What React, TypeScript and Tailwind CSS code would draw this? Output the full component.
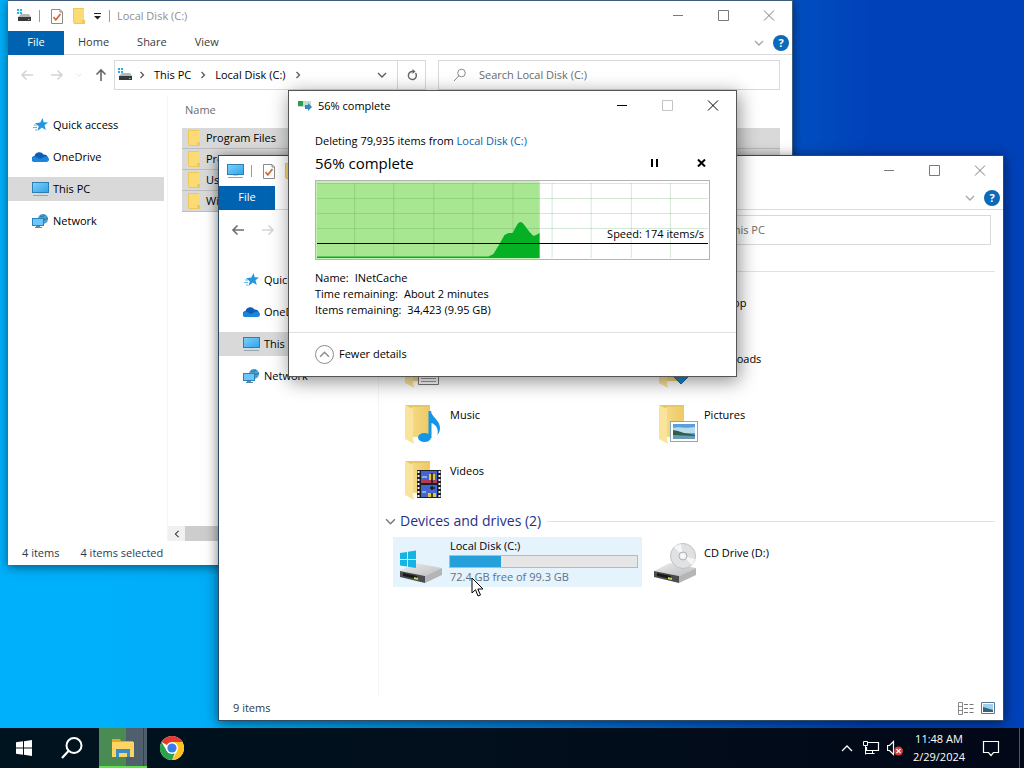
import type { ReactNode } from "react";

/* ---------- icons ---------- */

function DriveSmallIcon() {
  return (
    <svg width="16" height="16" viewBox="0 0 16 16" aria-hidden="true">
      <path d="M1 1h2v2H1zM4 1h2v2H4zM1 4h2v2H1zM4 4h2v2H4z" fill="#1fb6dc" />
      <path d="M2 9l3-3h8l2 3z" fill="#b4b7b9" />
      <path d="M2 9h13v4H2z" fill="#37393b" />
      <path d="M12 11h1.500v1H12z" fill="#5fe07a" />
    </svg>
  );
}

function PropertiesIcon() {
  return (
    <svg width="14" height="17" viewBox="0 0 14 17" aria-hidden="true">
      <path d="M1.500 1.500h8.500l2.500 2.500v11.500h-11z" fill="#fff" stroke="#8c8c8c" />
      <path d="M10 1.500v2.500h2.500" fill="none" stroke="#8c8c8c" />
      <path d="M3.500 9l2.300 2.800L10.500 6" fill="none" stroke="#cf6a35" strokeWidth="1.700" />
    </svg>
  );
}

function FolderSmallIcon() {
  return (
    <svg width="14" height="16" viewBox="0 0 14 16" aria-hidden="true">
      <path d="M1 0h11v12l1 1v3H2l-1-2z" fill="#efc85a" />
      <path d="M2 1h10v14H2z" fill="#fadb76" />
      <path d="M10 12h3v4h-3z" fill="#efc75a" />
    </svg>
  );
}

function MonitorIcon() {
  return (
    <svg width="17" height="16" viewBox="0 0 17 16" aria-hidden="true">
      <defs>
        <linearGradient id="screen" x1="0" y1="0" x2="1" y2="1">
          <stop offset="0" stopColor="#7fd0fb" />
          <stop offset="1" stopColor="#2fa3ea" />
        </linearGradient>
      </defs>
      <rect x="0.500" y="1.500" width="16" height="10" fill="url(#screen)" stroke="#2c7fb5" />
      <path d="M6 12h5v1H6z" fill="#c3d0d8" />
      <path d="M1 14h15v1H1z" fill="#8fa6b4" />
    </svg>
  );
}

function StarIcon() {
  return (
    <svg width="16" height="16" viewBox="0 0 16 16" aria-hidden="true">
      <path d="M9.500 1l1.200 4.200 4.300.300-3.500 2.800 1.300 4.700-3.900-2.400L4.500 14l1.300-4.800L2 6.200l5.300-.600z" fill="#2296de" />
      <path d="M1 8h3M0 10.500h4M2 13h2" stroke="#5cb8ee" />
    </svg>
  );
}

function CloudIcon() {
  return (
    <svg width="17" height="16" viewBox="0 0 17 16" aria-hidden="true">
      <path d="M3 13a3 3 0 0 1-.500-6A5 5 0 0 1 11.500 5.500 4 4 0 0 1 14 13z" fill="#0d5fb4" />
      <path d="M3 13c-1.500 0-3-1-3-2.800C0 8.500 1.500 7.500 3 7.500L8 10l5-2.500c2.300 0 4 1.200 4 3S15.500 13 14 13z" fill="#1a86de" />
    </svg>
  );
}

function NetworkIcon() {
  return (
    <svg width="17" height="16" viewBox="0 0 17 16" aria-hidden="true">
      <circle cx="11" cy="6" r="5" fill="#4c9fd0" />
      <path d="M8 3c2 1 4 0 5-1M7 6c3 1 6 1 9-1" stroke="#276f9f" fill="none" />
      <rect x="0.500" y="5.500" width="11" height="7" fill="#6cc6f7" stroke="#2b82b8" />
      <path d="M4 13h4v1H4zM3 14h7v1H3z" fill="#5c8aa5" />
    </svg>
  );
}

function HelpIcon() {
  return (
    <button aria-label="Help" className="flex h-4 w-4 items-center justify-center rounded-full bg-[#0a6ab8] text-[11px] font-bold leading-4 text-white">
      ?
    </button>
  );
}

function Chevron({ dir, color = "#5a5a5a", size = 10 }: { dir: "up" | "down" | "left" | "right"; color?: string; size?: number }) {
  const paths = {
    up: "M1 7l4-4 4 4",
    down: "M1 3l4 4 4-4",
    left: "M7 1L3 5l4 4",
    right: "M3.500 2l3 3-3 3",
  };
  return (
    <svg width={size} height={size} viewBox="0 0 10 10" aria-hidden="true">
      <path d={paths[dir]} fill="none" stroke={color} strokeWidth="1.300" />
    </svg>
  );
}

function Arrow({ dir, color }: { dir: "left" | "right" | "up"; color: string }) {
  const paths = {
    left: "M13 7H2M6.500 2.500L2 7l4.500 4.500",
    right: "M1 7h11M7.500 2.500L12 7l-4.500 4.500",
    up: "M7 13V2M2.500 6.500L7 2l4.500 4.500",
  };
  return (
    <svg width="14" height="14" viewBox="0 0 14 14" aria-hidden="true">
      <path d={paths[dir]} fill="none" stroke={color} strokeWidth="1.600" />
    </svg>
  );
}

/* base folder with an optional overlay drawn by the caller */
function FolderLarge({ children }: { children?: ReactNode }) {
  return (
    <svg width="44" height="48" viewBox="0 0 44 48" aria-hidden="true">
      <defs>
        <linearGradient id="folderFront" x1="0" y1="0" x2="1" y2="0">
          <stop offset="0" stopColor="#f6d983" />
          <stop offset="1" stopColor="#edc965" />
        </linearGradient>
      </defs>
      <path d="M6 6h24v32H6z" fill="#e8c565" />
      <path d="M12 8h18v30H12z" fill="url(#folderFront)" />
      <path d="M5 6l8 4v30l1 5-9-5z" fill="#fae39a" />
      {children}
    </svg>
  );
}

function DocumentOverlay() {
  return (
    <>
      <path d="M18.500 14.500h20v27h-20z" fill="#fff" stroke="#777" />
      <path d="M21 20h15M21 24h15M21 28h15M21 32h15M21 35.500h15M21 38.500h15" stroke="#9a9a9a" />
    </>
  );
}

function DownloadOverlay() {
  return <path d="M23 20h8v11h6L27 41 17 31h6z" fill="#1d86cf" stroke="#14669f" />;
}

function MusicOverlay() {
  return (
    <>
      <ellipse cx="24.500" cy="38.500" rx="6.500" ry="4.500" fill="#1496e8" />
      <path d="M28.500 12h2.500c.500 6 9 9 9 17 0 3-1 5-2.500 7 1-6-1-10-6-12v15h-3z" fill="#1496e8" />
    </>
  );
}

function PictureOverlay() {
  return (
    <>
      <rect x="16.500" y="22.500" width="27" height="20" fill="#fff" stroke="#8aa6ba" />
      <path d="M19 25h22v15H19z" fill="#5b9fd6" />
      <path d="M19 29c6-2 10 1 22-1v6H19z" fill="#b7dcee" />
      <path d="M19 31l5 1 6 2 11 2v1H19z" fill="#2f5e4c" />
      <path d="M19 36l22 1v3H19z" fill="#6a9bb4" />
    </>
  );
}

function VideoOverlay() {
  return (
    <>
      <path d="M17 15h24v28H17z" fill="#1e1e28" />
      <path d="M18.500 16v27M39.500 16v27" stroke="#f2f2f2" strokeWidth="2" strokeDasharray="2 2" />
      <path d="M21 16h16v12H21zM21 30h16v12H21z" fill="#4166cf" />
      <path d="M21 26c5-4 9 0 16-1v3H21z" fill="#b23d52" />
      <path d="M29 19h6v6h-6zM28 38h8v4h-8z" fill="#e5c532" />
      <path d="M32 18v10M32 31v4M30 33h5M32 38v4" stroke="#181820" strokeWidth="1.500" />
      <path d="M22 22h5M22 37h4" stroke="#e8e8ff" />
    </>
  );
}

function DriveLarge({ kind }: { kind: "windows" | "cd" }) {
  return (
    <svg width="44" height="48" viewBox="0 0 44 48" aria-hidden="true">
      <defs>
        <linearGradient id="driveTop" x1="0" y1="0" x2="1" y2="1">
          <stop offset="0" stopColor="#ececec" />
          <stop offset="1" stopColor="#bdbebf" />
        </linearGradient>
      </defs>
      <path d="M0 34l16-8 26 5-17 8z" fill="url(#driveTop)" />
      <path d="M0 34l25 5v7L0 40z" fill="#4a4c4e" />
      <path d="M25 39l17-8v7l-17 8z" fill="#b3b5b7" />
      <path d="M3 36l14 3v3L3 39z" fill="#17191a" />
      <path d="M14 40l4 1v2l-4-1z" fill="#c6d84d" />
      {kind === "cd" && (
        <>
          <circle cx="29" cy="19" r="12.500" fill="#dfe1e2" stroke="#bfc2c4" />
          <path d="M29 19L20 10a13 13 0 0 1 7-3zM29 19l9 9a13 13 0 0 0 3-6z" fill="#f5f6f6" />
          <circle cx="29" cy="19" r="4" fill="#eef0f1" stroke="#adb1b3" />
          <circle cx="29" cy="19" r="1.500" fill="#fff" />
        </>
      )}
      {kind === "windows" && (
        <path d="M0 16l7-1v7H0zM8 14.800l8-1.300V22H8zM0 23h7v6.500l-7-1zM8 23h8v8l-8-1.300z" fill="#16b4e2" />
      )}
    </svg>
  );
}

function DeleteProgressIcon() {
  return (
    <svg width="16" height="12" viewBox="0 0 16 12" aria-hidden="true">
      <path d="M1 1h13v6H1z" fill="#c7dcd0" />
      <path d="M1 1h5v5H1z" fill="#2e9b52" />
      <path d="M8 5h3V3l4 4-4 4V9H8z" fill="#3288bd" />
    </svg>
  );
}

/* ---------- window chrome ---------- */

function WindowControls({ color, maxColor = color }: { color: string; maxColor?: string }) {
  return (
    <div className="flex">
      <button aria-label="Minimize" className="flex h-7 w-[46px] items-center justify-center">
        <svg width="12" height="12" viewBox="0 0 12 12">
          <path d="M1 5.500h10" stroke={color} />
        </svg>
      </button>
      <button aria-label="Maximize" className="flex h-7 w-[45px] items-center justify-center">
        <svg width="12" height="12" viewBox="0 0 12 12">
          <path d="M0.500 0.500h10v10h-10z" fill="none" stroke={maxColor} />
        </svg>
      </button>
      <button aria-label="Close" className="flex h-7 w-[46px] items-center justify-center">
        <svg width="12" height="12" viewBox="0 0 12 12">
          <path d="M1 0.500l10 10M11 0.500l-10 10" stroke={color} />
        </svg>
      </button>
    </div>
  );
}

function TitleBar({ title, icon }: { title: string; icon: ReactNode }) {
  return (
    <div className="flex h-[30px] shrink-0 items-center justify-between">
      <div className="flex items-center pl-2">
        {icon}
        <span className="ml-[7px] h-3 w-px bg-[#9a9a9a]" />
        <span className="ml-[10px]"><PropertiesIcon /></span>
        <span className="ml-2"><FolderSmallIcon /></span>
        <svg width="9" height="8" viewBox="0 0 9 8" className="ml-[7px]" aria-hidden="true">
          <path d="M1 1.500h7" stroke="#222" />
          <path d="M1 4h7L4.500 7.500z" fill="#222" />
        </svg>
        <span className="ml-[7px] h-3 w-px bg-[#9a9a9a]" />
        <span className="ml-[7px] text-[#8f8f8f]">{title}</span>
      </div>
      <WindowControls color="#7a7a7a" />
    </div>
  );
}

function Ribbon({ tabs }: { tabs: string[] }) {
  return (
    <div className="flex h-6 shrink-0 items-center border-b border-[#dadbdc]">
      <button className="h-6 w-14 bg-[#0063b1] text-white">File</button>
      {tabs.map((tab) => (
        <button key={tab} className="h-6 px-[14px] text-[#3b3b3b]">{tab}</button>
      ))}
      <div className="ml-auto flex items-center gap-[9px] pr-[3px]">
        <Chevron dir="down" color="#a5a5a5" />
        <HelpIcon />
      </div>
    </div>
  );
}

function AddressRow({ path, icon, canGoBack, searchLabel }: { path: string[]; icon: ReactNode; canGoBack?: boolean; searchLabel: string }) {
  return (
    <div className="flex h-[40px] shrink-0 items-center pl-3 pr-3">
      <button aria-label="Back"><Arrow dir="left" color={canGoBack ? "#6e6e6e" : "#d4d4d4"} /></button>
      <button aria-label="Forward" className="ml-4"><Arrow dir="right" color="#d4d4d4" /></button>
      <button aria-label="Recent locations" className="ml-3"><Chevron dir="down" color="#dcdcdc" size={6} /></button>
      <button aria-label="Up" className="ml-3"><Arrow dir="up" color="#666" /></button>
      <div className="ml-[6px] flex h-[30px] w-[312px] items-center border border-[#d9d9d9] pl-[2px]">
        {icon}
        {path.map((part) => (
          <span key={part} className="flex items-center">
            <span className="mx-1"><Chevron dir="right" /></span>
            <button className="px-[3px]">{part}</button>
          </span>
        ))}
        <span className="mx-1"><Chevron dir="right" /></span>
        <button aria-label="Previous locations" className="ml-auto mr-[10px]"><Chevron dir="down" /></button>
        <button aria-label="Refresh" className="flex h-7 w-7 items-center justify-center border-l border-[#d9d9d9]">
          <svg width="12" height="12" viewBox="0 0 12 12" aria-hidden="true">
            <path d="M9.500 4A4 4 0 1 1 6 2.500h2" fill="none" stroke="#666" strokeWidth="1.400" />
            <path d="M6.500 0l3 2.500-3 2.500z" fill="#666" />
          </svg>
        </button>
      </div>
      <label className="ml-3 flex h-[30px] min-w-0 flex-1 items-center border border-[#d9d9d9] pl-[14px]">
        <svg width="14" height="14" viewBox="0 0 14 14" className="shrink-0" aria-hidden="true">
          <circle cx="8.500" cy="5" r="3.800" fill="none" stroke="#8a8a8a" />
          <path d="M5.800 7.800L1 13" stroke="#8a8a8a" />
        </svg>
        <input
          type="text"
          aria-label={searchLabel}
          placeholder={searchLabel}
          className="ml-3 min-w-0 flex-1 bg-transparent outline-none placeholder:text-[#6d6d6d]"
        />
      </label>
    </div>
  );
}

const navItems = [
  { label: "Quick access", icon: <StarIcon /> },
  { label: "OneDrive", icon: <CloudIcon /> },
  { label: "This PC", icon: <MonitorIcon />, active: true },
  { label: "Network", icon: <NetworkIcon /> },
];

function NavPane() {
  return (
    <nav className="flex w-[160px] shrink-0 flex-col gap-2 border-r border-[#f5f5f5] pr-[3px] pt-[18px]">
      {navItems.map((item) => (
        <a
          key={item.label}
          href="#"
          className={item.active ? "flex h-6 items-center gap-1 bg-[#d9d9d9] pl-6" : "flex h-6 items-center gap-1 pl-6"}
        >
          <span className="flex w-[17px] justify-center">{item.icon}</span>
          {item.label}
        </a>
      ))}
    </nav>
  );
}

/* ---------- windows ---------- */

const files = ["Program Files", "Program Files (x86)", "Users", "Windows"];

function DiskWindow() {
  return (
    <section className="absolute left-2 top-0 flex h-[565px] w-[785px] flex-col border-r border-t border-[#3d5c7c] bg-white shadow-[0_2px_10px_rgba(0,0,0,0.5)]">
      <TitleBar title="Local Disk (C:)" icon={<DriveSmallIcon />} />
      <Ribbon tabs={["Home", "Share", "View"]} />
      <AddressRow path={["This PC", "Local Disk (C:)"]} icon={<DriveSmallIcon />} searchLabel="Search Local Disk (C:)" />
      <div className="flex min-h-0 flex-1">
        <NavPane />
        <div className="flex min-w-0 flex-1 flex-col">
          <table className="ml-[14px] mr-3 border-separate border-spacing-0 text-left">
            <thead>
              <tr>
                <th className="h-[33px] pb-[2px] pl-[3px] font-normal text-[#6d6d6d]">Name</th>
              </tr>
            </thead>
            <tbody>
              {files.map((file) => (
                <tr key={file} className="bg-[#d9d9d9]">
                  <td className="h-[21px] border-b border-[#bdbdbd] pl-[5px]">
                    <span className="flex items-center gap-[5px]">
                      <FolderSmallIcon />
                      {file}
                    </span>
                  </td>
                </tr>
              ))}
            </tbody>
          </table>
          <div className="mt-auto flex h-[15px] bg-[#f0f0f0]">
            <button aria-label="Scroll left" className="flex w-[17px] items-center justify-center"><Chevron dir="left" size={8} color="#333" /></button>
            <div className="w-[400px] bg-[#cdcdcd]" />
          </div>
        </div>
      </div>
      <footer className="flex h-6 shrink-0 items-center gap-[21px] pl-[14px] text-[#2b3b4d]">
        <span>4 items</span>
        <span>4 items selected</span>
      </footer>
    </section>
  );
}

const folders = [
  { label: "3D Objects", overlay: null },
  { label: "Desktop", overlay: null },
  { label: "Documents", overlay: <DocumentOverlay /> },
  { label: "Downloads", overlay: <DownloadOverlay /> },
  { label: "Music", overlay: <MusicOverlay /> },
  { label: "Pictures", overlay: <PictureOverlay /> },
  { label: "Videos", overlay: <VideoOverlay /> },
];

function GroupHeader({ children }: { children: ReactNode }) {
  return (
    <h2 className="flex h-5 items-center gap-1 text-[14px] leading-5 text-[#1e3287]">
      <Chevron dir="down" color="#777" size={11} />
      {children}
      <span className="ml-[2px] h-px flex-1 bg-[#e2e2e2]" />
    </h2>
  );
}

function ThisPcWindow() {
  return (
    <section className="absolute left-[218px] top-[155px] flex h-[566px] w-[786px] flex-col border border-[#2f4a66] bg-white shadow-[0_2px_12px_rgba(0,0,0,0.55)]">
      <TitleBar title="This PC" icon={<MonitorIcon />} />
      <Ribbon tabs={["Computer", "View"]} />
      <AddressRow path={["This PC"]} icon={<MonitorIcon />} canGoBack searchLabel="Search This PC" />
      <div className="flex min-h-0 flex-1">
        <NavPane />
        <div className="min-w-0 flex-1 pl-[6px] pr-2 pt-[11px]">
          <GroupHeader>Folders (7)</GroupHeader>
          <ul className="grid grid-cols-[249px_249px] gap-x-[5px] pl-2 pt-[6px]">
            {folders.map((folder) => (
              <li key={folder.label} className="flex h-14 gap-[6px] pl-[7px]">
                <FolderLarge>{folder.overlay}</FolderLarge>
                <span className="pt-2">{folder.label}</span>
              </li>
            ))}
          </ul>
          <GroupHeader>Devices and drives (2)</GroupHeader>
          <ul className="grid grid-cols-[249px_249px] gap-x-[5px] pl-2 pt-[6px]">
            <li className="flex h-[50px] gap-[5px] bg-[#e5f3fd] pl-[7px]">
              <DriveLarge kind="windows" />
              <div className="flex w-[189px] flex-col pt-px">
                <span id="disk-c" className="pl-px leading-4">Local Disk (C:)</span>
                <div role="meter" aria-labelledby="disk-c" aria-valuenow={27} aria-valuemin={0} aria-valuemax={100} className="my-px h-[13px] border border-[#b9b9b9] bg-[#e6e6e6]">
                  <div className="h-full bg-[#26a0da]" style={{ width: "27.5%" }} />
                </div>
                <span className="pl-px leading-4 text-[#5d7285]">72.4 GB free of 99.3 GB</span>
              </div>
            </li>
            <li className="flex h-[50px] gap-[6px] pl-[7px]">
              <DriveLarge kind="cd" />
              <span className="pt-2">CD Drive (D:)</span>
            </li>
          </ul>
        </div>
      </div>
      <footer className="flex h-6 shrink-0 items-center justify-between pl-[14px] pr-2 text-[#2b3b4d]">
        <span>9 items</span>
        <div className="flex gap-[7px]">
          <button aria-label="Details view">
            <svg width="16" height="13" viewBox="0 0 16 13" aria-hidden="true">
              <path d="M0.500 0.500h4v12h-4zM0.500 4.500h4M0.500 8.500h4" fill="none" stroke="#8a8a8a" />
              <path d="M6 2.500h4M11.500 2.500h4M6 6.500h4M11.500 6.500h4M6 10.500h4M11.500 10.500h4" stroke="#777" />
            </svg>
          </button>
          <button aria-label="Large icons view">
            <svg width="14" height="12" viewBox="0 0 14 12" aria-hidden="true">
              <path d="M0.500 0.500h13v11H0.500z" fill="#fff" stroke="#5b7690" />
              <path d="M2 2h10v8H2z" fill="#9fd0ea" />
              <path d="M2 5l10 3v2H2z" fill="#2f6580" />
            </svg>
          </button>
        </div>
      </footer>
    </section>
  );
}

const columns = [38, 77, 117, 156, 196, 235, 274, 314, 353];
const rows = [2, 17, 32, 47, 62];

function SpeedChart() {
  return (
    <div className="relative mt-1 h-20 border border-[#b4b4b4] bg-white">
      <svg width="100%" height="100%" viewBox="0 0 392 78" preserveAspectRatio="none" aria-hidden="true">
        <path d="M0 0h223v78H0z" fill="#c2efb4" />
        <path d="M1 2h222v75H1z" fill="#a8e691" />
        {columns.map((x) => (
          <path key={x} d={`M${x + 0.5} 2v75`} stroke="#2d8a3a" strokeOpacity="0.2" />
        ))}
        {rows.map((y) => (
          <path key={y} d={`M1 ${y + 0.5}h390`} stroke="#2d8a3a" strokeOpacity="0.2" />
        ))}
        <path
          d="M1 75.500H172L177 73 183 63 188 54 192 52H196L201 43Q204 39 207 43L213 51 217 55Q220 54 223 52V77H1z"
          fill="#06b025"
        />
        <path d="M1 62.500h390" stroke="#000" />
      </svg>
      <span className="absolute right-[5px] top-[45px] leading-4">Speed: 174 items/s</span>
    </div>
  );
}

function DeleteDialog() {
  return (
    <section
      role="dialog"
      aria-label="56% complete"
      className="absolute left-[288px] top-[90px] flex h-[287px] w-[449px] flex-col border border-[#555] bg-white shadow-[2px_4px_18px_rgba(0,0,0,0.45)]"
    >
      <div className="flex h-[30px] items-center pl-2">
        <DeleteProgressIcon />
        <span className="ml-[5px]">56% complete</span>
        <div className="ml-auto"><WindowControls color="#000" maxColor="#c4c4c4" /></div>
      </div>
      <div className="flex-1 px-[26px] pt-3">
        <p className="leading-4">
          Deleting 79,935 items from <a href="#" className="text-[#0b5eb0]">Local Disk (C:)</a>
        </p>
        <div className="flex h-[27px] items-center">
          <h1 className="text-[15px] leading-6">56% complete</h1>
          <button aria-label="Pause" className="ml-auto">
            <svg width="8" height="8" viewBox="0 0 8 8"><path d="M0 0h2v8H0zM5 0h2v8H5z" /></svg>
          </button>
          <button aria-label="Cancel" className="ml-[38px] mr-1">
            <svg width="9" height="8" viewBox="0 0 9 8"><path d="M1 0.500l7 7M8 0.500l-7 7" stroke="#000" strokeWidth="2" /></svg>
          </button>
        </div>
        <SpeedChart />
        <dl className="pt-[10px] leading-4">
          <div className="flex gap-[6px]"><dt>Name:</dt><dd>INetCache</dd></div>
          <div className="flex gap-[6px]"><dt>Time remaining:</dt><dd>About 2 minutes</dd></div>
          <div className="flex gap-[6px]"><dt>Items remaining:</dt><dd>34,423 (9.95 GB)</dd></div>
        </dl>
      </div>
      <div className="flex h-11 items-center border-t border-[#dfdfdf] pl-[26px]">
        <button className="flex items-center gap-[5px]">
          <span className="flex h-[19px] w-[19px] items-center justify-center rounded-full border border-[#8c8c8c]">
            <Chevron dir="up" color="#8c8c8c" size={11} />
          </span>
          Fewer details
        </button>
      </div>
    </section>
  );
}

/* ---------- taskbar ---------- */

function Taskbar() {
  return (
    <footer className="flex h-10 shrink-0 items-center bg-linear-to-r from-[#001420] to-[#020817] text-white">
      <button aria-label="Start" className="flex h-10 w-12 items-center justify-center">
        <svg width="16" height="16" viewBox="0 0 16 16">
          <path d="M0 2.300L7 1.300V7.500H0zM8 1.200L16 0v7.500H8zM0 8.500h7v6.200l-7-1zM8 8.500h8V16l-8-1.200z" fill="#fff" />
        </svg>
      </button>
      <button aria-label="Search" className="mr-[3px] flex h-10 w-12 items-center justify-center">
        <svg width="24" height="24" viewBox="0 0 24 24">
          <circle cx="14" cy="9.500" r="7.500" fill="none" stroke="#fff" strokeWidth="2" />
          <path d="M8.500 15L2 22" stroke="#fff" strokeWidth="2.200" />
        </svg>
      </button>
      <button aria-label="File Explorer" className="flex h-10 w-12 flex-col border-b-2 border-[#5de04b] bg-linear-to-r from-[#498b52] from-56% to-[#505f6c] to-56%">
        <svg width="48" height="38" viewBox="0 0 48 38">
          <path d="M44.500 0v38" stroke="#36424d" />
          <path d="M13 11h8l1 2h12v6H13z" fill="#e2a82c" />
          <path d="M13 14h22v15H13z" fill="#fcd462" />
          <path d="M17 21h14v8h-3v-4h-8v4h-3z" fill="#3c8cc9" />
        </svg>
      </button>
      <button aria-label="Chrome" className="flex h-10 w-[50px] items-center justify-center">
        <svg width="24" height="24" viewBox="0 0 24 24">
          <circle cx="12" cy="12" r="12" fill="#fff" />
          <path d="M12 12L1.600 6A12 12 0 0 1 22.400 6H12z" fill="#e33b2e" />
          <path d="M12 6h10.400A12 12 0 0 1 12 24l5.200-9z" fill="#fcc31e" />
          <path d="M1.600 6L6.800 15l8 2.300L12 24A12 12 0 0 1 1.600 6z" fill="#2ba24c" />
          <circle cx="12" cy="12" r="6" fill="#fff" />
          <circle cx="12" cy="12" r="4.600" fill="#3a7bea" />
        </svg>
      </button>
      <div className="ml-auto flex h-10 items-center">
        <button aria-label="Show hidden icons">
          <svg width="12" height="8" viewBox="0 0 12 8"><path d="M1 7l5-5 5 5" fill="none" stroke="#fff" strokeWidth="1.300" /></svg>
        </button>
        <button aria-label="Network" className="ml-[9px]">
          <svg width="18" height="16" viewBox="0 0 18 16">
            <path d="M6 2.500h10.500v8H4.500V7" fill="none" stroke="#fff" strokeWidth="1.200" />
            <path d="M1.500 1.500h4v4h-4zM3.500 5.500v9M3.500 13.500h9M10.500 10.500v3" fill="none" stroke="#fff" />
          </svg>
        </button>
        <button aria-label="Volume muted" className="ml-[7px]">
          <svg width="17" height="16" viewBox="0 0 17 16">
            <path d="M0.500 5.500h2L6.500 1.500v13l-4-4h-2z" fill="none" stroke="#fff" strokeWidth="1.200" />
            <circle cx="11.500" cy="11" r="4.500" fill="#d63b3b" />
            <path d="M9.500 9l4 4M13.500 9l-4 4" stroke="#fff" strokeWidth="1.200" />
          </svg>
        </button>
        <div className="ml-2 flex w-[54px] flex-col items-center whitespace-nowrap leading-[18px]">
          <span>11:48 AM</span>
          <span>2/29/2024</span>
        </div>
        <button aria-label="Notifications" className="ml-4">
          <svg width="18" height="17" viewBox="0 0 18 17">
            <path d="M1.500 1.500h15v11h-5L9 15.500 6.500 12.500h-5z" fill="none" stroke="#fff" strokeWidth="1.200" />
          </svg>
        </button>
        <span className="ml-[19px] mr-1 h-10 w-px bg-[#4b5563]" />
      </div>
    </footer>
  );
}

export default function App() {
  return (
    <div className="flex min-h-screen flex-col font-['Open_Sans','Noto_Sans',sans-serif] text-[11px] text-black">
      <main className="relative min-h-[728px] flex-1 overflow-hidden bg-linear-to-r from-[#00b0fb] from-0% via-[#00aef8] via-22% to-[#0041b9] to-85%">
        <DiskWindow />
        <ThisPcWindow />
        <DeleteDialog />
        <svg width="14" height="21" viewBox="0 0 14 21" className="absolute left-[471px] top-[577px]" aria-hidden="true">
          <path d="M1 1v15l3.500-3.300L7 19l2.500-1-2.700-6H12z" fill="#fff" stroke="#000" />
        </svg>
      </main>
      <Taskbar />
    </div>
  );
}
